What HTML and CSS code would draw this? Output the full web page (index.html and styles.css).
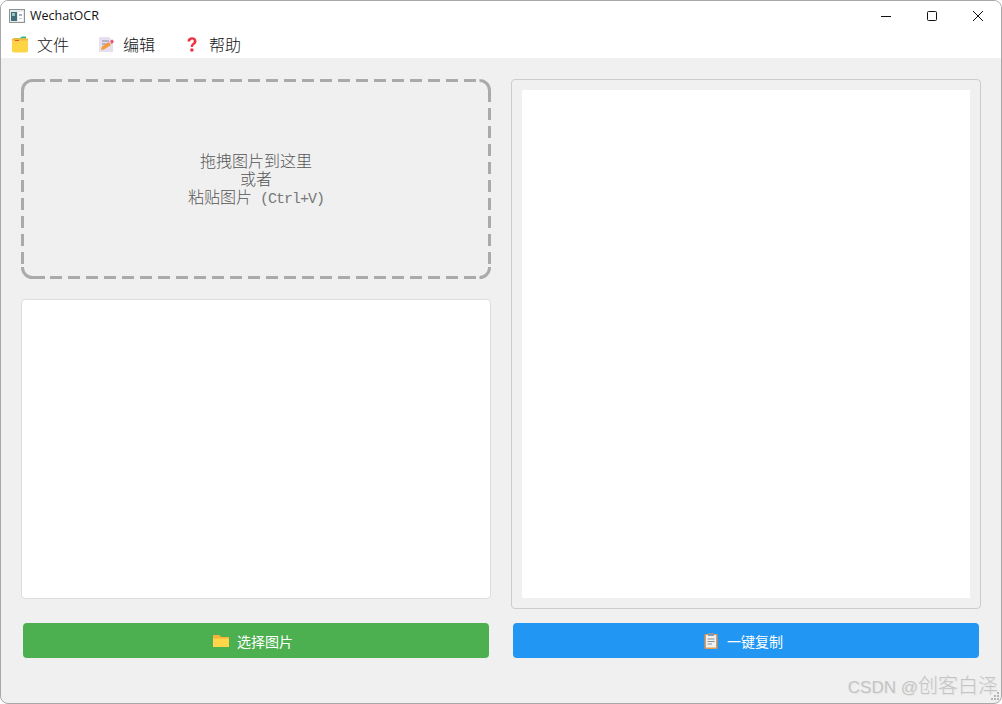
FILE: index.html
```html
<!DOCTYPE html>
<html lang="zh">

<head>
    <meta charset="UTF-8">
    <meta name="viewport" content="width=device-width, initial-scale=1.0">
    <title>WechatOCR</title>
    <link rel="stylesheet" href="styles.css">
</head>

<body>
    <div class="window">
        <div class="titlebar">
            <svg class="app-icon" width="16" height="16" viewBox="0 0 16 16">
                <rect x="0.5" y="1.5" width="15" height="13" fill="#e8eaec" stroke="#8d9399" />
                <rect x="2" y="4" width="6" height="9" fill="#3f6f78" />
                <rect x="3" y="5" width="3" height="3" fill="#9cc3c4" />
                <rect x="9" y="4" width="5" height="9" fill="#fff" />
                <rect x="10" y="6" width="3" height="2" fill="#9fb4bb" />
                <rect x="10" y="10" width="3" height="1" fill="#c2ccd0" />
            </svg>
            <span class="app-name">WechatOCR</span>
            <div class="win-controls">
                <svg width="12" height="12" viewBox="0 0 12 12">
                    <path d="M1 6.5H11" stroke="#111" stroke-width="1" fill="none" />
                </svg>
                <svg width="12" height="12" viewBox="0 0 12 12">
                    <rect x="1.5" y="1.5" width="9" height="9" rx="1" stroke="#111" fill="none" />
                </svg>
                <svg width="12" height="12" viewBox="0 0 12 12">
                    <path d="M1 1L11 11M11 1L1 11" stroke="#111" stroke-width="1" fill="none" />
                </svg>
            </div>
        </div>

        <div class="menubar">
            <div class="menu-item">
                <svg width="18" height="18" viewBox="0 0 18 18">
                    <path d="M3 3H9L11 1.5H15V5H3Z" fill="#2fb98a" />
                    <rect x="1" y="3.5" width="16" height="14" rx="2" fill="#fdd444" />
                    <rect x="1" y="3.5" width="16" height="2" fill="#f4b93c" />
                    <rect x="4" y="5" width="4" height="1" fill="#e8503a" />
                </svg>
                <span>文件</span>
            </div>
            <div class="menu-item">
                <svg width="18" height="18" viewBox="0 0 18 18">
                    <path d="M2 2H12L16 6V17H2Z" fill="#e6e0ee" />
                    <path d="M5 6H12M5 9H12" stroke="#8b7fa0" stroke-width="1.2" />
                    <path d="M4 15L5 11.5L12 7L14 10L7 14.5Z" fill="#f39a3c" />
                    <path d="M13 6L15.5 4.5L17 7L14.5 9Z" fill="#ef4f7a" />
                </svg>
                <span>编辑</span>
            </div>
            <div class="menu-item">
                <svg width="18" height="18" viewBox="0 0 18 18">
                    <path d="M4.5 6.5C4.5 1 13.5 1 13.5 6.2C13.5 9.6 10 9.4 10 12H7.8C7.8 8.2 10.8 8.4 10.8 6.2C10.8 3.8 7.2 4 7.2 6.5Z" fill="#f0303a" />
                    <circle cx="8.9" cy="15" r="1.8" fill="#f0303a" />
                </svg>
                <span>帮助</span>
            </div>
        </div>

        <div class="content">
            <div class="panels">
                <div class="left-col">
                    <div class="dropzone">
                        <svg class="dash" width="470" height="200" viewBox="0 0 470 200" fill="none" stroke="#aaa" stroke-width="3">
                            <!-- sides restart their dashes, corners stay solid -->
                            <path d="M29 1.5H455M29 198.5H455M1.5 29V185M468.5 29V185" stroke-dasharray="12 6" />
                            <path d="M1.5 23V11.5A10 10 0 0 1 11.5 1.5H24M459 1.5H458.5A10 10 0 0 1 468.5 11.5V23M468.5 188V188.5A10 10 0 0 1 458.5 198.5H459M24 198.5H11.5A10 10 0 0 1 1.5 188.5V188" />
                        </svg>
                        <p>拖拽图片到这里</p>
                        <p>或者</p>
                        <p>粘贴图片<span class="latin"> (Ctrl+V)</span></p>
                    </div>
                    <div class="textbox"></div>
                </div>
                <div class="result-panel">
                    <div class="result-inner"></div>
                </div>
            </div>
            <div class="buttons">
                <div class="btn btn-green">
                    <svg width="16" height="16" viewBox="0 0 16 16">
                        <path d="M0 2H6L8 4H16V14H0Z" fill="#ffd54a" />
                        <path d="M0 2H6L8 4H16V5.5H0Z" fill="#fbb03b" />
                    </svg>
                    <span>选择图片</span>
                </div>
                <div class="btn btn-blue">
                    <svg width="16" height="16" viewBox="0 0 16 16">
                        <rect x="1.5" y="1" width="13" height="15" rx="1" fill="#e39a52" />
                        <rect x="3" y="2" width="10" height="12.5" fill="#f1f1f1" />
                        <rect x="5" y="0" width="6" height="3" fill="#8a97a8" />
                        <path d="M4.5 6H11.5M4.5 8.5H11.5M4.5 11H9" stroke="#8a8f98" stroke-width="1" />
                    </svg>
                    <span>一键复制</span>
                </div>
            </div>
        </div>

        <div class="watermark"><span class="wm-latin">CSDN @</span>创客白泽</div>
        <svg class="grip" width="9" height="9" viewBox="0 0 9 9" fill="#b5b5b5">
            <rect x="6" y="0" width="2" height="2" />
            <rect x="3" y="3" width="2" height="2" />
            <rect x="6" y="3" width="2" height="2" />
            <rect x="0" y="6" width="2" height="2" />
            <rect x="3" y="6" width="2" height="2" />
            <rect x="6" y="6" width="2" height="2" />
        </svg>
    </div>
</body>

</html>
```

FILE: styles.css
```css
* {
    margin: 0;
    padding: 0;
    box-sizing: border-box;
}

body {
    background-color: #fff;
    font-family: "Noto Sans CJK SC", "Liberation Sans", sans-serif;
}

.window {
    position: relative;
    width: 1002px;
    height: 704px;
    background-color: #f0f0f0;
    border: 1px solid #a8a8a8;
    border-radius: 8px;
    overflow: hidden;
    display: flex;
    flex-direction: column;
}

.titlebar {
    height: 29px;
    background-color: #fff;
    display: flex;
    align-items: center;
    padding-left: 8px;
}

.app-icon {
    margin-right: 5px;
}

.app-name {
    font-family: "Open Sans", "Liberation Sans", sans-serif;
    font-size: 12.5px;
    color: #111;
}

.win-controls {
    margin-left: auto;
    display: flex;
    gap: 34px;
    padding-right: 17px;
}

.menubar {
    height: 28px;
    background-color: #fff;
    display: flex;
    padding-left: 10px;
    gap: 28px;
}

.menu-item {
    display: flex;
    align-items: center;
    gap: 8px;
    font-size: 16px;
    font-weight: 300;
    color: #111;
}

.content {
    flex: 1;
    padding: 21px 20px 0;
}

.panels {
    display: grid;
    grid-template-columns: 470px 470px;
    gap: 20px;
}

.left-col {
    display: flex;
    flex-direction: column;
    gap: 20px;
}

.dropzone {
    position: relative;
    height: 200px;
    padding-top: 1px;
    display: flex;
    flex-direction: column;
    align-items: center;
    justify-content: center;
    font-size: 16px;
    font-weight: 300;
    line-height: 18px;
    color: #555;
}

.dash {
    position: absolute;
    top: 0;
    left: 0;
}

.latin {
    font-family: "Liberation Mono", monospace;
    font-size: 15px;
    letter-spacing: -1px;
    white-space: pre;
    color: #777;
}

.textbox {
    height: 300px;
    background-color: #fff;
    border: 1px solid #ddd;
    border-radius: 4px;
}

.result-panel {
    height: 530px;
    border: 1px solid #ccc;
    border-radius: 4px;
    padding: 10px;
}

.result-inner {
    height: 100%;
    background-color: #fff;
}

.buttons {
    display: grid;
    grid-template-columns: 466px 466px;
    gap: 24px;
    margin: 14px 2px 0;
}

.btn {
    height: 35px;
    border-radius: 4px;
    display: flex;
    align-items: center;
    justify-content: center;
    gap: 8px;
    padding-right: 6px;
    font-size: 14px;
    color: #fff;
}

.btn-green {
    background-color: #4caf50;
}

.btn-blue {
    background-color: #2196f3;
}

.watermark {
    position: absolute;
    right: 3px;
    bottom: 1px;
    font-size: 20px;
    font-weight: 300;
    line-height: 28px;
    color: #c4c4c4;
    text-shadow: 1px 1px 1px #e4e4e4;
}

.wm-latin {
    font-family: "Liberation Sans", sans-serif;
    font-size: 17px;
}

.grip {
    position: absolute;
    right: 1px;
    bottom: 2px;
}
```
